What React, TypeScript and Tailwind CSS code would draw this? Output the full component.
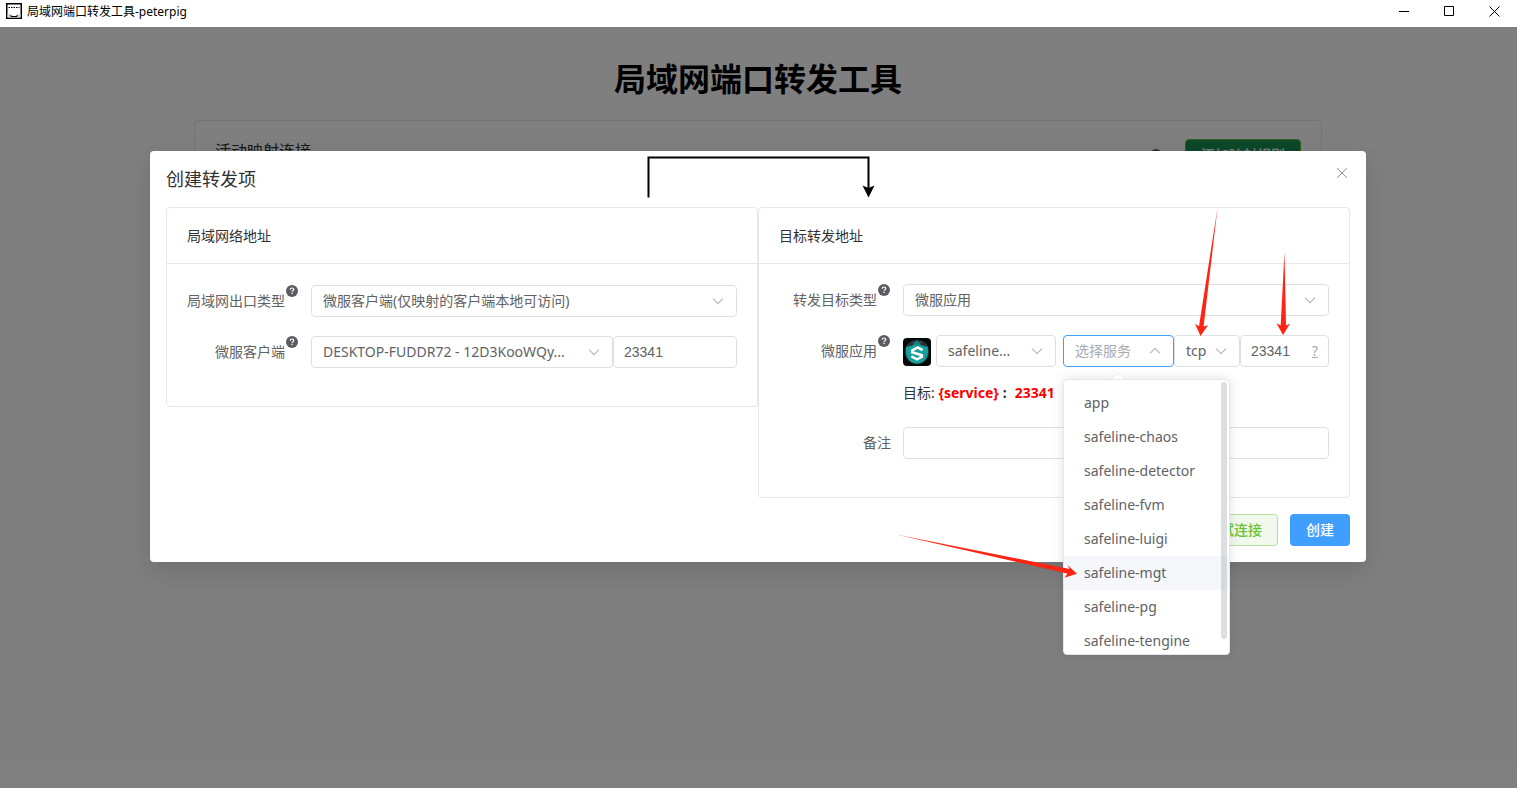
import type { ReactNode } from "react";

const services = [
  "app",
  "safeline-chaos",
  "safeline-detector",
  "safeline-fvm",
  "safeline-luigi",
  "safeline-mgt",
  "safeline-pg",
  "safeline-tengine",
];

function HelpIcon() {
  return (
    <svg viewBox="0 0 12 12" className="h-3 w-3 shrink-0" aria-hidden="true">
      <circle cx="6" cy="6" r="6" fill="#5b5d61" />
      <path
        d="M4.2 4.7C4.2 3.6 5 3 6 3s1.8.6 1.8 1.5c0 1.1-1.7 1.2-1.7 2.3"
        fill="none"
        stroke="#fff"
        strokeWidth="1.2"
      />
      <rect x="5.4" y="7.7" width="1.3" height="1.3" fill="#fff" />
    </svg>
  );
}

function Chevron({ up = false }: { up?: boolean }) {
  return (
    <svg
      viewBox="0 0 12 12"
      className="pointer-events-none absolute inset-y-0 right-[13px] my-auto h-3 w-3"
      fill="none"
      stroke="#b4b7be"
      strokeWidth="1.1"
      aria-hidden="true"
    >
      <path d={up ? "M1 8.3 6 3.3l5 5" : "M1 3.7l5 5 5-5"} />
    </svg>
  );
}

function SelectBox({
  id,
  label,
  value,
  options = [],
  open = false,
  className,
  children,
}: {
  id: string;
  label?: string;
  value: string;
  options?: string[];
  open?: boolean;
  className: string;
  children?: ReactNode;
}) {
  return (
    <div className={`relative h-8 ${className}`}>
      <select
        id={id}
        aria-label={label}
        defaultValue={value}
        className={`h-8 w-full appearance-none rounded border bg-white pl-[11px] pr-6 text-sm outline-none ${
          open ? "border-[#409eff] text-[#a8abb2]" : "border-[#dcdfe6] text-[#606266]"
        }`}
      >
        <option>{value}</option>
        {options.map((o) => (
          <option key={o}>{o}</option>
        ))}
      </select>
      <Chevron up={open} />
      {children}
    </div>
  );
}

function FieldLabel({ htmlFor, children, help = false }: { htmlFor: string; children: string; help?: boolean }) {
  return (
    <label
      htmlFor={htmlFor}
      className={`flex h-8 w-31 shrink-0 justify-end text-sm leading-[31px] text-[#606266] ${help ? "pr-[13px]" : "pr-3"}`}
    >
      <span>{children}</span>
      {help && (
        <span className="ml-px">
          <HelpIcon />
        </span>
      )}
    </label>
  );
}

function Panel({ title, children }: { title: string; children: ReactNode }) {
  return (
    <section className="min-w-0 flex-1 rounded border border-[#e4e7ed] bg-white">
      <h3 className="border-b border-[#e4e7ed] px-5 pt-[18px] pb-[17px] text-sm leading-5 text-[#303133]">{title}</h3>
      <div className="flex flex-col gap-[19px] px-5 pt-5 pb-[38px]">{children}</div>
    </section>
  );
}

function AppLogo() {
  return (
    <svg viewBox="0 0 28 28" className="mt-[3px] h-7 w-7 shrink-0" role="img" aria-label="safeline">
      <rect width="28" height="28" rx="4" fill="#050808" />
      <circle cx="14" cy="14" r="12.2" fill="#283536" />
      <path
        d="M3.5 8.5C6 8.6 8.7 8 10.7 6.5L14 5.6l3.3.9c2 1.5 4.7 2.1 7.2 2C26.6 17 23 25 14 25.7 5 25 1.4 17 3.5 8.5Z"
        fill="#16a09c"
      />
      <path d="M9.5 4.2 12.8 4.6 14 2.3l1.2 2.3 3.3-.4-2 1.5H11.5Z" fill="#16a09c" />
      <path d="M14 5v3.500" stroke="#0b6062" strokeWidth="1" />
      <path
        d="M19.6 12.2 14.6 9.4 9.2 12.4v1.8l9.600 3v1.600L14 21.300l-5.600-3"
        fill="none"
        stroke="#fff"
        strokeWidth="2.6"
      />
    </svg>
  );
}

function ServiceMenu() {
  return (
    <div className="absolute top-11 left-0 z-10 w-[167px]">
      <div className="relative h-[276px] overflow-hidden rounded border border-[#e4e7ed] bg-white shadow-[0_0_12px_rgba(0,0,0,0.12)]">
        <ul role="listbox" aria-label="选择服务" className="py-1.5">
          {services.map((s) => (
            <li
              key={s}
              role="option"
              aria-selected={s === "safeline-mgt"}
              className={`h-[34px] px-5 text-sm leading-[34px] text-[#606266] ${s === "safeline-mgt" ? "bg-[#f5f7fa]" : ""}`}
            >
              {s}
            </li>
          ))}
        </ul>
        <div className="absolute top-0.5 right-0.5 h-[257px] w-1.5 rounded-full bg-[#909399]/30" />
      </div>
      <div className="absolute -top-[5px] left-[50px] h-2.5 w-2.5 rotate-45 rounded-tl-[2px] border-t border-l border-[#e4e7ed] bg-white [clip-path:polygon(0_0,100%_0,0_100%)]" />
    </div>
  );
}

function Annotations() {
  return (
    <svg
      className="pointer-events-none absolute top-0 left-0 z-20 h-full w-full overflow-visible"
      aria-hidden="true"
    >
      <path d="M498.5 46.5V6.5H718.5V38" fill="none" stroke="#000" strokeWidth="2" />
      <path d="M712.5 34.5 718.5 37 724.5 34.5 718.5 46.5Z" fill="#000" />
      <g fill="#ff2313">
        <path d="M1067.5 57 1053.6 175.5 1058 174.3 1050.5 185 1045 172.7 1049 175.3Z" />
        <path d="M1134.5 101 1136 174.5 1140 172.7 1133 184 1126.5 172.3 1130.7 174.5Z" />
        <path d="M746 383.5 919.5 418 917.7 414.3 927 422.7 914.3 426.7 917.5 422.7 913 421.5Z" />
      </g>
    </svg>
  );
}

function CreateDialog() {
  return (
    <div
      role="dialog"
      aria-label="创建转发项"
      className="relative rounded bg-white p-4 shadow-[0_12px_32px_4px_rgba(0,0,0,0.04),0_8px_20px_rgba(0,0,0,0.08)]"
    >
      <header className="mb-4 flex h-6 items-start justify-between">
        <h2 className="text-lg leading-6 text-[#303133]">创建转发项</h2>
        <button type="button" aria-label="关闭" className="-mt-0.5 p-[3px] text-[#909399]">
          <svg viewBox="0 0 10 10" className="h-2.5 w-2.5" fill="none" stroke="currentColor" strokeWidth="1">
            <path d="M0 0l10 10M10 0 0 10" />
          </svg>
        </button>
      </header>

      <form>
        <div className="flex items-start">
          <Panel title="局域网络地址">
            <div className="mt-px flex">
              <FieldLabel htmlFor="exit-type" help>
                局域网出口类型
              </FieldLabel>
              <SelectBox id="exit-type" value="微服客户端(仅映射的客户端本地可访问)" className="min-w-0 flex-1" />
            </div>
            <div className="flex">
              <FieldLabel htmlFor="client" help>
                微服客户端
              </FieldLabel>
              <SelectBox id="client" value="DESKTOP-FUDDR72 - 12D3KooWQy..." className="min-w-0 flex-1" />
              <input
                aria-label="本地端口"
                defaultValue="23341"
                className="h-8 w-31 rounded border border-[#dcdfe6] px-2.5 font-['Liberation_Sans',sans-serif] text-sm text-[#606266] outline-none"
              />
            </div>
          </Panel>

          <Panel title="目标转发地址">
            <div className="flex">
              <FieldLabel htmlFor="target-type" help>
                转发目标类型
              </FieldLabel>
              <SelectBox id="target-type" value="微服应用" className="min-w-0 flex-1" />
            </div>
            <div className="flex">
              <FieldLabel htmlFor="target-app" help>
                微服应用
              </FieldLabel>
              <div className="min-w-0 flex-1">
                <div className="flex">
                  <AppLogo />
                  <SelectBox id="target-app" value="safeline..." className="ml-[5px] w-30" />
                  <SelectBox
                    id="service"
                    label="选择服务"
                    value="选择服务"
                    options={services}
                    open
                    className="ml-[7px] w-[111px]"
                  >
                    <ServiceMenu />
                  </SelectBox>
                  <SelectBox id="protocol" label="协议" value="tcp" options={["udp"]} className="w-[66px]" />
                  <div className="flex h-8 min-w-0 flex-1 items-center rounded border border-[#dcdfe6] px-2.5 text-sm">
                    <input
                      aria-label="目标端口"
                      defaultValue="23341"
                      className="w-full min-w-0 bg-transparent font-['Liberation_Sans',sans-serif] text-[#606266] outline-none"
                    />
                    <a href="#port-help" className="text-[#a8abb2] underline">
                      ?
                    </a>
                  </div>
                </div>
                <p className="mt-2 h-[33px] text-sm leading-9 text-[#303133]">
                  目标: <b className="text-[#ff0000]">{"{service}"}</b>
                  <b className="pr-2 pl-1">:</b>
                  <b className="text-[#ff0000]">23341</b>
                </p>
              </div>
            </div>
            <div className="flex">
              <FieldLabel htmlFor="remark">备注</FieldLabel>
              <input
                id="remark"
                className="h-8 min-w-0 flex-1 rounded border border-[#dcdfe6] px-2.5 text-sm text-[#606266] outline-none"
              />
            </div>
          </Panel>
        </div>

        <footer className="mt-4 flex justify-end gap-3 text-sm">
          <button
            type="button"
            className="h-8 rounded border border-[#b3e19d] bg-[#f0f9eb] px-[15px] font-medium text-[#67c23a]"
          >
            测试连接
          </button>
          <button type="button" className="h-8 rounded bg-[#409eff] px-4 font-medium text-white">
            创建
          </button>
        </footer>
      </form>
      <Annotations />
    </div>
  );
}

function TitleBar() {
  return (
    <header className="flex h-[27px] shrink-0 items-center bg-white pl-1.5 text-xs text-black">
      <svg viewBox="0 0 16 16" className="mr-[5px] mb-[5px] h-4 w-4" aria-hidden="true">
        <rect x=".75" y=".75" width="14.5" height="14.5" fill="#fff" stroke="#000" strokeWidth="1.5" />
        <path d="M1.5 11H5v2.5h6V11h3.5v3.5h-13Z" fill="#d4d4d4" />
        <path d="M2.5 4.5h11" stroke="#000" strokeDasharray="1.5 1" />
        <path d="M5 12v1.5h6V12" fill="none" stroke="#000" />
      </svg>
      <span className="mb-1">局域网端口转发工具-peterpig</span>
      <div className="mb-1 ml-auto flex">
        <button type="button" aria-label="最小化" className="flex h-5 w-[45px] items-center justify-center">
          <svg viewBox="0 0 11 11" className="h-[11px] w-[11px]" stroke="#000">
            <path d="M0 5.5h10" />
          </svg>
        </button>
        <button type="button" aria-label="最大化" className="flex h-5 w-[45px] items-center justify-center">
          <svg viewBox="0 0 11 11" className="h-[11px] w-[11px]" fill="none" stroke="#000">
            <path d="M.5.5h9v9h-9Z" />
          </svg>
        </button>
        <button type="button" aria-label="关闭窗口" className="flex h-5 w-[45px] items-center justify-center">
          <svg viewBox="0 0 11 11" className="h-[11px] w-[11px]" stroke="#000">
            <path d="M.5.5l10 10M10.5.5l-10 10" />
          </svg>
        </button>
      </div>
    </header>
  );
}

export default function App() {
  return (
    <div className="flex min-h-screen flex-col bg-white font-['Noto_Sans','Noto_Sans_CJK_SC',sans-serif]">
      <TitleBar />
      <main className="relative flex flex-1 flex-col">
        <div className="pt-8 pr-[195px] pl-[194px]">
          <h1 className="text-center text-[32px] leading-10 font-bold text-black">局域网端口转发工具</h1>
          <section className="mt-[21px] h-80 rounded border border-[#e4e7ed]">
            <div className="flex items-start px-5 pt-[18px]">
              <h2 className="text-base leading-6 text-[#303133]">活动映射连接</h2>
              <span className="mt-2.5 mr-[23px] ml-auto">
                <HelpIcon />
              </span>
              <button
                type="button"
                className="h-8 rounded border border-[#67c23a] bg-[#1c9054] px-[15px] text-sm font-medium text-white"
              >
                添加映射规则
              </button>
            </div>
          </section>
        </div>
        <div className="absolute inset-0 bg-black/50 pt-31 pr-[151px] pl-[150px]">
          <CreateDialog />
        </div>
      </main>
    </div>
  );
}
